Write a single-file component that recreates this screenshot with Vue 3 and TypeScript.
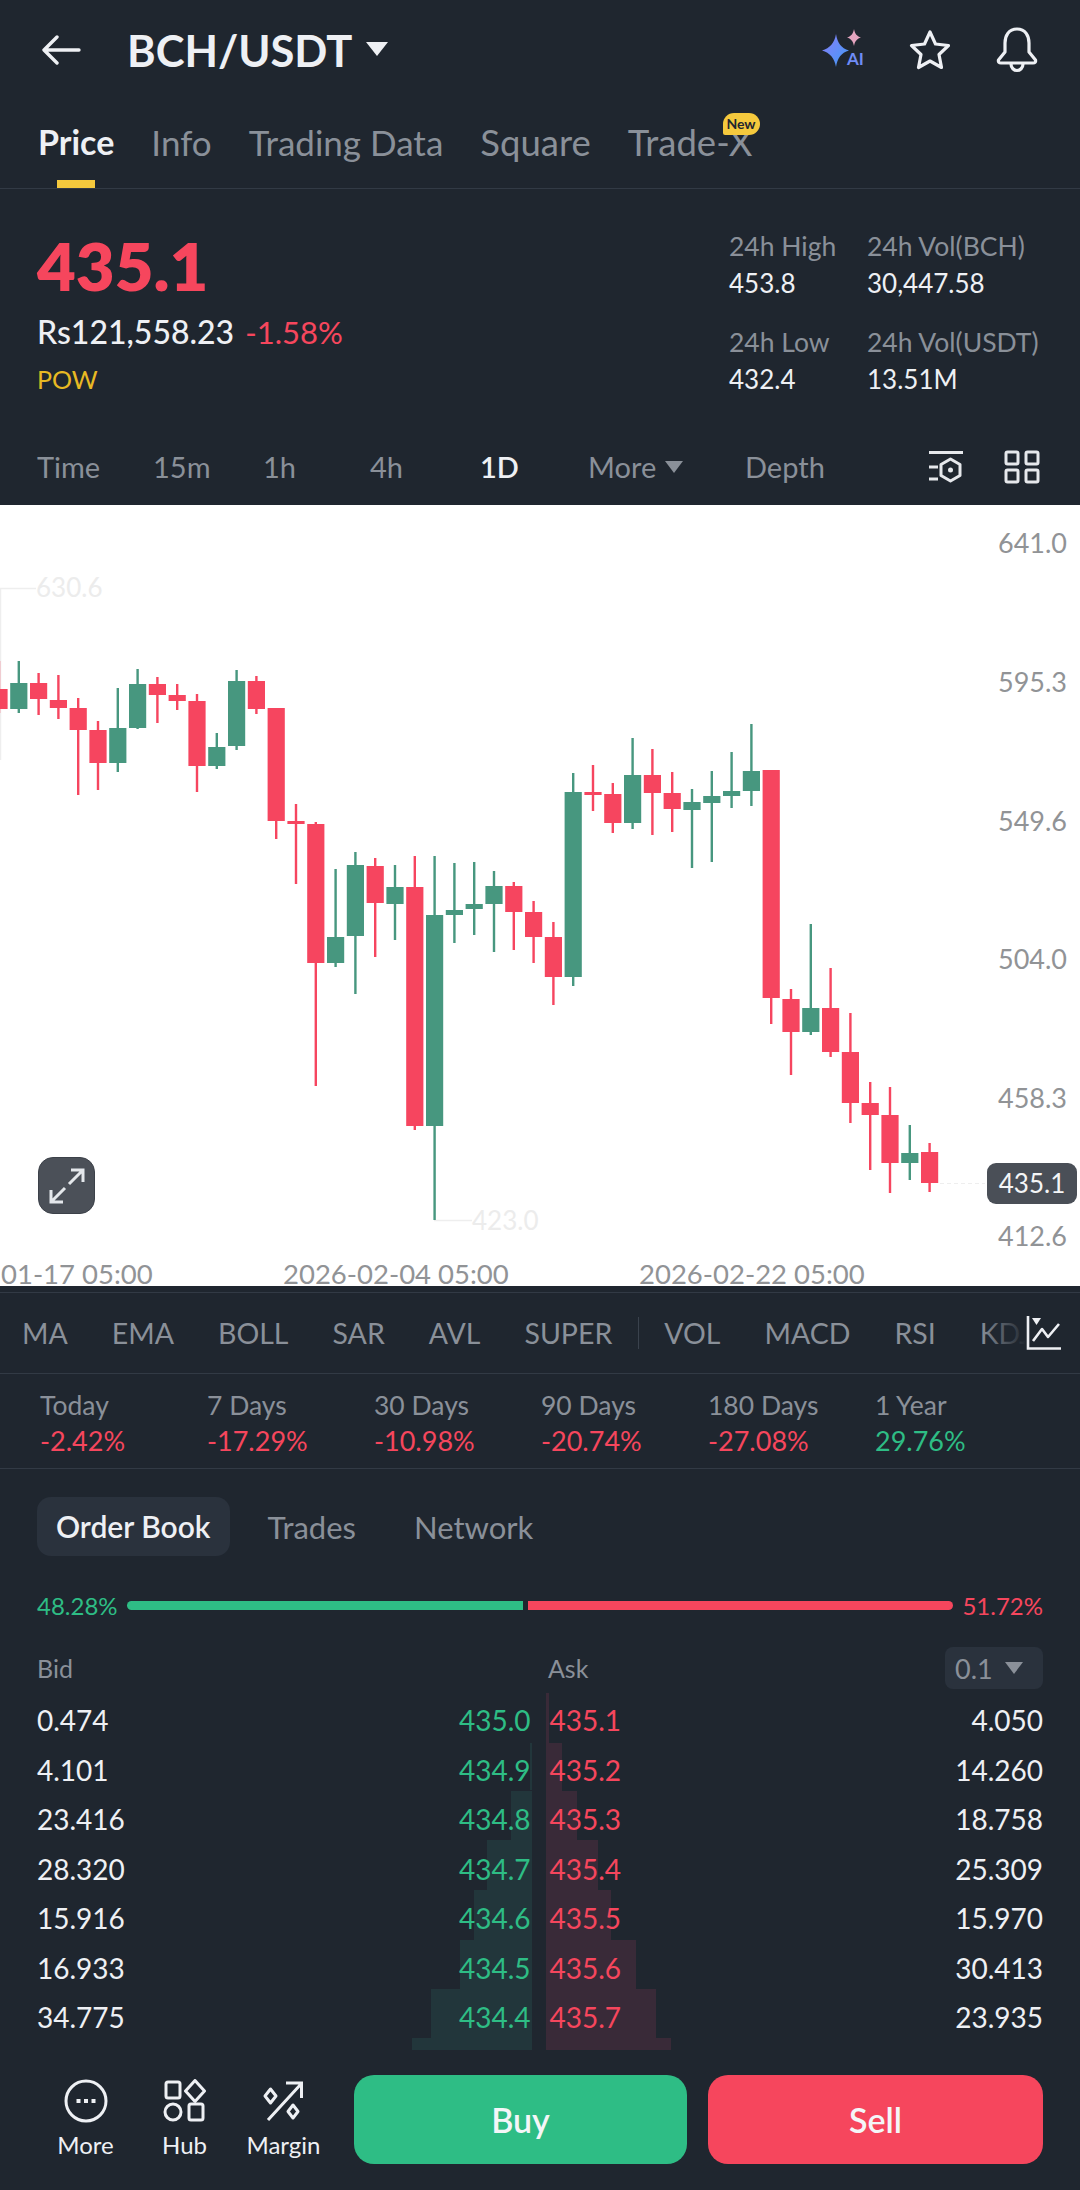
<template>
  <div class="page">
    <header class="topbar">
      <svg class="back" width="40" height="32" viewBox="0 0 40 32" fill="none" stroke="#eef0f4" stroke-width="3.4" stroke-linecap="round" stroke-linejoin="round">
        <path d="M3 16H37M15 3 2 16l13 13" />
      </svg>
      <span class="pair">BCH/USDT</span>
      <i class="caret caret-white"></i>
      <div class="top-icons">
        <svg width="44" height="42" viewBox="0 0 44 42">
          <defs>
            <linearGradient id="spark" x1="0" y1="0" x2="1" y2="1">
              <stop offset="0" stop-color="#8a7cf8" />
              <stop offset="1" stop-color="#3f9cf6" />
            </linearGradient>
          </defs>
          <path d="M15 5C16.500 14 20 19 28 21.500 20 24 16.500 29 15 38 13.500 29 9 24 1 21.500 9 19 13.500 14 15 5Z" fill="url(#spark)" />
          <path d="M33 0C33.800 4.500 35.500 7 40 8.500 35.500 10 33.800 12.500 33 17 32.200 12.500 30.500 10 26 8.500 30.500 7 32.200 4.500 33 0Z" fill="#e5a5c0" />
          <text x="26" y="36" class="ai">AI</text>
        </svg>
        <svg width="44" height="42" viewBox="0 0 44 42" fill="none" stroke="#eef0f4" stroke-width="3.2" stroke-linejoin="round">
          <path d="M22 3 27.500 15 40.500 16.500 31 25.500 33.500 38.500 22 32 10.500 38.500 13 25.500 3.500 16.500 16.500 15Z" />
        </svg>
        <svg width="44" height="46" viewBox="0 0 44 46" fill="none" stroke="#eef0f4" stroke-width="3.2" stroke-linejoin="round">
          <path d="M22 2C13.500 2 10 9 10 16V25L3.500 33C3 35 4 36 6 36H38C40 36 41 35 40.500 33L34 25V16C34 9 30.500 2 22 2Z" />
          <path d="M16 37C16 41 19 43.500 22 43.500S28 41 28 37" />
        </svg>
      </div>
    </header>

    <nav class="tabs">
      <span v-for="tab in tabs" :key="tab" class="tab" :class="{ active: tab === 'Price' }">
        {{ tab }}
        <em v-if="tab === 'Trade-X'" class="new">New</em>
      </span>
    </nav>

    <section class="summary">
      <div class="quote">
        <div class="last">435.1</div>
        <div class="fiat">Rs121,558.23<span class="down">-1.58%</span></div>
        <div class="tag">POW</div>
      </div>
      <div class="stats">
        <div v-for="s in stats" :key="s.label" class="stat">
          <span class="stat-label">{{ s.label }}</span>
          <span class="stat-value">{{ s.value }}</span>
        </div>
      </div>
    </section>

    <section class="frames">
      <span v-for="f in frames" :key="f" class="frame" :class="{ active: f === '1D' }">
        {{ f }}<i v-if="f === 'More'" class="caret caret-grey"></i>
      </span>
      <div class="frame-icons">
        <svg width="38" height="34" viewBox="0 0 38 34" fill="none" stroke="#e6e8ec" stroke-width="3">
          <path d="M2 2.500H36M2 17H11M2 29H11" />
          <path d="M23.500 9 33 14.500V25.500L23.500 31 14 25.500V14.500Z" stroke-linejoin="round" />
          <circle cx="23.500" cy="20" r="2.500" fill="#e6e8ec" stroke="none" />
        </svg>
        <svg width="36" height="34" viewBox="0 0 36 34" fill="none" stroke="#e6e8ec" stroke-width="3">
          <rect x="2" y="2" width="12" height="12" rx="1.500" />
          <rect x="22" y="2" width="12" height="12" rx="1.500" />
          <rect x="2" y="20" width="12" height="12" rx="1.500" />
          <rect x="22" y="20" width="12" height="12" rx="1.500" />
        </svg>
      </div>
    </section>

    <section class="chart">
      <svg class="plot" width="1080" height="781" viewBox="0 505 1080 781">
        <path d="M0.500 760V588.500H36" fill="none" stroke="#eeeeee" stroke-width="1.500" />
        <text x="36" y="597" class="ghost">630.6</text>
        <path d="M434 1220.500H472" stroke="#eeeeee" stroke-width="1.500" />
        <text x="472" y="1230" class="ghost">423.0</text>
        <path d="M940 1183.500H985" stroke="#eeeeee" stroke-width="1" stroke-dasharray="4 3" />
        <g v-for="(c, i) in candles" :key="i" :fill="c[4] === 'r' ? '#f6455f' : '#47977f'">
          <rect :x="candleX(i) - 1.200" :y="c[2]" width="2.400" :height="c[3] - c[2]" />
          <rect :x="candleX(i) - 8.600" :y="c[0]" width="17.200" :height="c[1] - c[0]" />
        </g>
        <text v-for="a in axis" :key="a.t" x="1067" :y="a.y" class="axis" text-anchor="end">{{ a.t }}</text>
        <text x="1" y="1284" class="axis time">01-17 05:00</text>
        <text x="283" y="1284" class="axis time">2026-02-04 05:00</text>
        <text x="639" y="1284" class="axis time">2026-02-22 05:00</text>
      </svg>
      <button class="expand">
        <svg width="38" height="38" viewBox="0 0 38 38" fill="none" stroke="#e4e7eb" stroke-width="3">
          <path d="M21 17 35 3M23 3H35V15M3 35 17 21M3 23V35H15" />
        </svg>
      </button>
      <span class="price-tag">435.1</span>
    </section>

    <section class="indicators">
      <div class="ind-list">
        <template v-for="ind in indicators" :key="ind">
          <span>{{ ind }}</span>
          <i v-if="ind === 'SUPER'" class="ind-sep"></i>
        </template>
      </div>
      <div class="ind-icon">
        <svg width="36" height="36" viewBox="0 0 36 36" fill="none" stroke="#eef0f4" stroke-width="2.600">
          <path d="M2 1V33.500H35" />
          <path d="M7 26 16 14 22 22 33 9" stroke-linejoin="round" />
          <path d="M6 3H15L10.500 10Z" fill="#eef0f4" stroke="none" />
        </svg>
      </div>
    </section>

    <section class="periods">
      <div v-for="p in periods" :key="p.label" class="period">
        <span class="period-label">{{ p.label }}</span>
        <span :class="p.value.startsWith('-') ? 'down' : 'up'">{{ p.value }}</span>
      </div>
    </section>

    <section class="book-tabs">
      <span class="book-tab active">Order Book</span>
      <span class="book-tab">Trades</span>
      <span class="book-tab">Network</span>
    </section>

    <section class="ratio">
      <span class="up">48.28%</span>
      <div class="ratio-bar"><i class="bar-bid"></i><i class="bar-ask"></i></div>
      <span class="down">51.72%</span>
    </section>

    <section class="book-head">
      <span class="head-bid">Bid</span>
      <span class="head-ask">Ask</span>
      <span class="step">0.1<i class="caret caret-grey"></i></span>
    </section>

    <section class="book">
      <i v-for="d in depth" :key="d.top" class="depth" :class="d.side" :style="{ top: d.top + 'px', height: d.height + 'px', width: d.width + 'px' }"></i>
      <div v-for="r in rows" :key="r[1]" class="row">
        <div class="side">
          <span class="qty">{{ r[0] }}</span>
          <span class="up">{{ r[1] }}</span>
        </div>
        <div class="side">
          <span class="down">{{ r[2] }}</span>
          <span class="qty">{{ r[3] }}</span>
        </div>
      </div>
    </section>

    <footer class="actions">
      <div class="tool">
        <svg width="44" height="44" viewBox="0 0 44 44" fill="none" stroke="#eef0f4" stroke-width="3">
          <circle cx="22" cy="22" r="20" />
          <path d="M12.500 22h4M20 22h4M27.500 22h4" stroke-width="4" />
        </svg>
        <span>More</span>
      </div>
      <div class="tool">
        <svg width="44" height="44" viewBox="0 0 44 44" fill="none" stroke="#eef0f4" stroke-width="3">
          <rect x="3" y="3" width="14" height="16" rx="2" />
          <path d="M32 1.500 41.500 12 32 22.500 22.500 12Z" stroke-linejoin="round" />
          <circle cx="10" cy="33" r="8" />
          <rect x="26" y="25" width="14" height="16" rx="2" />
        </svg>
        <span>Hub</span>
      </div>
      <div class="tool">
        <svg width="44" height="44" viewBox="0 0 44 44" fill="none" stroke="#eef0f4" stroke-width="3">
          <path d="M6 41 39 5M24 4H39.500V19" />
          <path d="M8.500 10 14 17 8.500 24 3 17Z" stroke-linejoin="round" />
          <path d="M31 26 36 32.500 31 39 26 32.500Z" stroke-linejoin="round" />
        </svg>
        <span>Margin</span>
      </div>
      <button class="trade buy">Buy</button>
      <button class="trade sell">Sell</button>
    </footer>
  </div>
</template>

<script setup lang="ts">
type Candle = [number, number, number, number, 'r' | 'g']

const tabs: string[] = ['Price', 'Info', 'Trading Data', 'Square', 'Trade-X']
const frames: string[] = ['Time', '15m', '1h', '4h', '1D', 'More', 'Depth']
const indicators: string[] = ['MA', 'EMA', 'BOLL', 'SAR', 'AVL', 'SUPER', 'VOL', 'MACD', 'RSI', 'KDJ']

const stats = [
  { label: '24h High', value: '453.8' },
  { label: '24h Vol(BCH)', value: '30,447.58' },
  { label: '24h Low', value: '432.4' },
  { label: '24h Vol(USDT)', value: '13.51M' },
]

const periods = [
  { label: 'Today', value: '-2.42%' },
  { label: '7 Days', value: '-17.29%' },
  { label: '30 Days', value: '-10.98%' },
  { label: '90 Days', value: '-20.74%' },
  { label: '180 Days', value: '-27.08%' },
  { label: '1 Year', value: '29.76%' },
]

const rows: string[][] = [
  ['0.474', '435.0', '435.1', '4.050'],
  ['4.101', '434.9', '435.2', '14.260'],
  ['23.416', '434.8', '435.3', '18.758'],
  ['28.320', '434.7', '435.4', '25.309'],
  ['15.916', '434.6', '435.5', '15.970'],
  ['16.933', '434.5', '435.6', '30.413'],
  ['34.775', '434.4', '435.7', '23.935'],
]

// tops are relative to the book section, which starts at y=1696
const depthBid = [[47, 47, 2], [95, 49, 21], [144, 50, 45], [194, 50, 58], [244, 49, 72], [293, 49, 101], [342, 12, 120]]
const depthAsk = [[-3, 50, 3], [47, 48, 16], [95, 49, 31], [144, 50, 52], [194, 50, 65], [244, 49, 90], [293, 49, 110], [342, 12, 125]]
const depth = [
  ...depthBid.map(([top, height, width]) => ({ side: 'bid', top, height, width })),
  ...depthAsk.map(([top, height, width]) => ({ side: 'ask', top: top + 0.1, height, width })),
]

const axis = [
  { t: '641.0', y: 553 },
  { t: '595.3', y: 692 },
  { t: '549.6', y: 831 },
  { t: '504.0', y: 969 },
  { t: '458.3', y: 1108 },
  { t: '412.6', y: 1246 },
]

// body top, body bottom, wick top, wick bottom, in page pixels
const candles: Candle[] = [
  [689, 709, 661, 713, 'r'],
  [683, 709, 661, 713, 'g'],
  [683, 699, 673, 715, 'r'],
  [700, 708, 675, 719, 'r'],
  [708, 730, 698, 795, 'r'],
  [730, 763, 721, 790, 'r'],
  [728, 763, 688, 772, 'g'],
  [684, 728, 669, 729, 'g'],
  [684, 695, 677, 723, 'r'],
  [695, 701, 684, 710, 'r'],
  [701, 766, 694, 792, 'r'],
  [747, 766, 733, 769, 'g'],
  [681, 746, 670, 750, 'g'],
  [681, 709, 676, 714, 'r'],
  [708, 821, 708, 839, 'r'],
  [821, 824, 804, 884, 'r'],
  [824, 963, 822, 1086, 'r'],
  [937, 963, 869, 967, 'g'],
  [865, 936, 852, 994, 'g'],
  [866, 903, 858, 957, 'r'],
  [887, 904, 865, 940, 'g'],
  [887, 1126, 856, 1130, 'r'],
  [915, 1126, 856, 1220, 'g'],
  [910, 915, 863, 943, 'g'],
  [904, 909, 862, 935, 'g'],
  [886, 904, 871, 952, 'g'],
  [886, 912, 882, 950, 'r'],
  [912, 937, 901, 963, 'r'],
  [937, 977, 922, 1005, 'r'],
  [792, 977, 773, 986, 'g'],
  [792, 795, 765, 811, 'r'],
  [794, 823, 783, 833, 'r'],
  [775, 823, 738, 829, 'g'],
  [775, 793, 749, 835, 'r'],
  [793, 809, 772, 832, 'r'],
  [802, 810, 789, 868, 'g'],
  [796, 803, 771, 862, 'g'],
  [791, 796, 752, 808, 'g'],
  [771, 791, 724, 806, 'g'],
  [770, 998, 770, 1024, 'r'],
  [999, 1032, 989, 1075, 'r'],
  [1008, 1032, 924, 1035, 'g'],
  [1008, 1052, 968, 1057, 'r'],
  [1052, 1103, 1013, 1123, 'r'],
  [1103, 1115, 1082, 1170, 'r'],
  [1115, 1163, 1087, 1193, 'r'],
  [1153, 1163, 1125, 1180, 'g'],
  [1152, 1183, 1143, 1192, 'r'],
]

const candleX = (i: number) => -1 + 19.8 * i
</script>

<style>
body {
  margin: 0;
  background: #1f262f;
}
</style>

<style scoped>
.page {
  width: 1080px;
  height: 2190px;
  overflow: hidden;
  background: #1f262f;
  color: #eef0f4;
  font-family: Lato, "Liberation Sans", sans-serif;
}

.caret {
  display: inline-block;
  width: 0;
  height: 0;
  border-left: 11px solid transparent;
  border-right: 11px solid transparent;
}

.caret-white {
  border-top: 14px solid #eef0f4;
}

.caret-grey {
  border-left-width: 9px;
  border-right-width: 9px;
  border-top: 12px solid #8a9099;
}

.up {
  color: #2ebd85;
}

.down {
  color: #f6465d;
}

.topbar {
  display: flex;
  align-items: center;
  height: 100px;
  padding: 0 41px 0 42px;
  box-sizing: border-box;
}

.pair {
  margin-left: 45px;
  font-size: 43.5px;
  font-weight: 700;
}

.topbar .caret {
  margin-left: 14px;
  margin-top: -2px;
}

.top-icons {
  display: flex;
  align-items: center;
  gap: 43px;
  margin-left: auto;
}

.ai {
  font-size: 17px;
  font-weight: 700;
  fill: #6f8cf6;
  font-family: Lato, sans-serif;
}

.tabs {
  display: flex;
  gap: 37px;
  height: 88px;
  padding-left: 38px;
  border-bottom: 1px solid #323a45;
  font-size: 35px;
  line-height: 84px;
  color: #8a9099;
}

.tab {
  position: relative;
}

.tab:nth-child(n + 4) {
  font-size: 36.5px;
}

.tab.active {
  color: #eef0f4;
  font-size: 34px;
  font-weight: 700;
}

.tab.active::after {
  content: "";
  position: absolute;
  left: 19px;
  bottom: 0;
  width: 38px;
  height: 8px;
  background: #f5c93d;
}

.new {
  position: absolute;
  top: 13px;
  right: -7px;
  width: 37px;
  height: 22px;
  border-radius: 11px 11px 11px 2px;
  background: #f5c93d;
  color: #1f262f;
  font-size: 14px;
  font-style: normal;
  font-weight: 700;
  line-height: 22px;
  text-align: center;
}

.summary {
  display: flex;
  justify-content: space-between;
  height: 241px;
  padding-left: 37px;
}

.last {
  margin-top: 44px;
  font-size: 67px;
  font-weight: 800;
  line-height: 64px;
  color: #f6465d;
}

.fiat {
  margin-top: 15px;
  font-size: 32px;
  font-weight: 500;
  line-height: 40px;
}

.fiat .down {
  margin-left: 11px;
  font-size: 31px;
  font-weight: 400;
}

.tag {
  margin-top: 10px;
  font-size: 25px;
  line-height: 34px;
  color: #e8b923;
}

.stats {
  display: grid;
  grid-template-columns: 138px 213px;
  grid-auto-rows: 96px;
  padding-top: 40px;
}

.stat {
  display: flex;
  flex-direction: column;
  gap: 3px;
  font-size: 26.500px;
  line-height: 34px;
}

.stat-label {
  color: #8a9099;
}

.stat-value {
  font-size: 26px;
}

.frames {
  display: grid;
  grid-template-columns: 116px 110px 107px 110px 108px 157px 182px auto;
  align-items: center;
  height: 75px;
  padding: 0 0 2px 37px;
  box-sizing: border-box;
  font-size: 29px;
  color: #8a9099;
}

.frame.active {
  color: #eef0f4;
  font-weight: 600;
}

.frame .caret {
  margin-left: 9px;
  vertical-align: 5px;
}

.frame-icons {
  display: flex;
  align-items: center;
  gap: 39px;
}

.chart {
  position: relative;
  height: 781px;
  background: #fff;
}

.plot {
  display: block;
}

.ghost {
  font-family: Lato, sans-serif;
  font-size: 26px;
  fill: #ececec;
}

.axis {
  font-family: Lato, sans-serif;
  font-size: 27px;
  fill: #919396;
}

.axis.time {
  font-size: 27.500px;
}

.expand {
  position: absolute;
  left: 38px;
  top: 652px;
  display: flex;
  align-items: center;
  justify-content: center;
  width: 57px;
  height: 57px;
  padding: 0;
  border: 1px solid #3c4149;
  border-radius: 15px;
  background: #4b5058;
}

.price-tag {
  position: absolute;
  left: 987px;
  top: 658px;
  width: 90px;
  height: 41px;
  border-radius: 9px;
  background: #4a4f57;
  color: #f4f5f6;
  font-size: 26px;
  line-height: 41px;
  text-align: center;
}

.indicators {
  position: relative;
  height: 82px;
  border-top: 1px solid #323a45;
  border-bottom: 1px solid #323a45;
  margin-top: 6px;
  box-sizing: border-box;
}

.ind-list {
  display: flex;
  align-items: center;
  gap: 44px;
  height: 100%;
  padding-left: 22px;
  overflow: hidden;
  white-space: nowrap;
  font-size: 28.500px;
  color: #8a9099;
}

.ind-sep {
  flex: none;
  width: 1px;
  height: 32px;
  margin: 0 -19px 0 -18px;
  background: #3a424d;
}

.ind-icon {
  position: absolute;
  top: 0;
  right: 0;
  bottom: 0;
  display: flex;
  align-items: center;
  width: 100px;
  padding-left: 46px;
  box-sizing: border-box;
  background: linear-gradient(90deg, rgba(31, 38, 47, 0) 0, #1f262f 46px);
}

.periods {
  display: grid;
  grid-template-columns: repeat(6, 167px);
  height: 95px;
  padding: 16px 0 0 40px;
  box-sizing: border-box;
  border-bottom: 1px solid #323a45;
  font-size: 27px;
}

.period {
  display: flex;
  flex-direction: column;
  gap: 4px;
  line-height: 31px;
}

.period-label {
  font-size: 26.500px;
  color: #8a9099;
}

.book-tabs {
  display: flex;
  align-items: center;
  gap: 38px;
  height: 59px;
  margin: 28px 0 0 37px;
  font-size: 31px;
  color: #8a9099;
}

.book-tab + .book-tab + .book-tab {
  margin-left: 20px;
}

.book-tab.active {
  padding: 0 19px;
  border-radius: 14px;
  background: #2a323d;
  color: #eef0f4;
  font-size: 30px;
  font-weight: 600;
  line-height: 59px;
}

.ratio {
  display: flex;
  align-items: center;
  gap: 9px;
  height: 34px;
  margin-top: 32px;
  padding: 0 37px;
  font-size: 24px;
}

.ratio-bar {
  display: flex;
  flex: 1;
  gap: 5px;
  height: 9px;
}

.ratio-bar i {
  display: block;
}

.bar-bid {
  flex: 395;
  border-radius: 5px 0 0 5px;
  background: #2ebd85;
}

.bar-ask {
  flex: 424;
  border-radius: 0 5px 5px 0;
  background: #f6465d;
}

.book-head {
  display: flex;
  align-items: center;
  height: 42px;
  margin-top: 25px;
  padding: 0 37px;
  font-size: 25px;
  color: #8a9099;
}

.head-ask {
  margin-left: 475px;
}

.step {
  display: flex;
  align-items: center;
  gap: 12px;
  margin-left: auto;
  width: 98px;
  height: 42px;
  padding-left: 10px;
  box-sizing: border-box;
  border-radius: 8px;
  background: #2a323d;
  font-size: 27px;
}

.book {
  position: relative;
  height: 347px;
  margin-top: 7px;
}

.depth {
  position: absolute;
}

.depth.bid {
  right: 548px;
  background: #22363b;
}

.depth.ask {
  left: 546px;
  background: #392a38;
}

.row {
  position: relative;
  display: flex;
  gap: 19px;
  height: 49.5px;
  padding: 0 37px;
  font-size: 28px;
  line-height: 49.5px;
}

.side {
  display: flex;
  justify-content: space-between;
  width: 494px;
}

.actions {
  display: flex;
  align-items: stretch;
  margin-top: 32px;
  padding-left: 36px;
  height: 89px;
}

.tool {
  display: flex;
  flex-direction: column;
  align-items: center;
  width: 99px;
  font-size: 24px;
}

.tool svg {
  margin-top: 4px;
}

.tool span {
  margin-top: 7px;
}

.trade {
  height: 89px;
  border: none;
  border-radius: 20px;
  color: #f4f6f8;
  font-family: inherit;
  font-size: 34px;
  font-weight: 600;
}

.buy {
  width: 333px;
  margin-left: 21px;
  background: #2ebd85;
}

.sell {
  width: 335px;
  margin-left: 21px;
  background: #f6465d;
}
</style>
